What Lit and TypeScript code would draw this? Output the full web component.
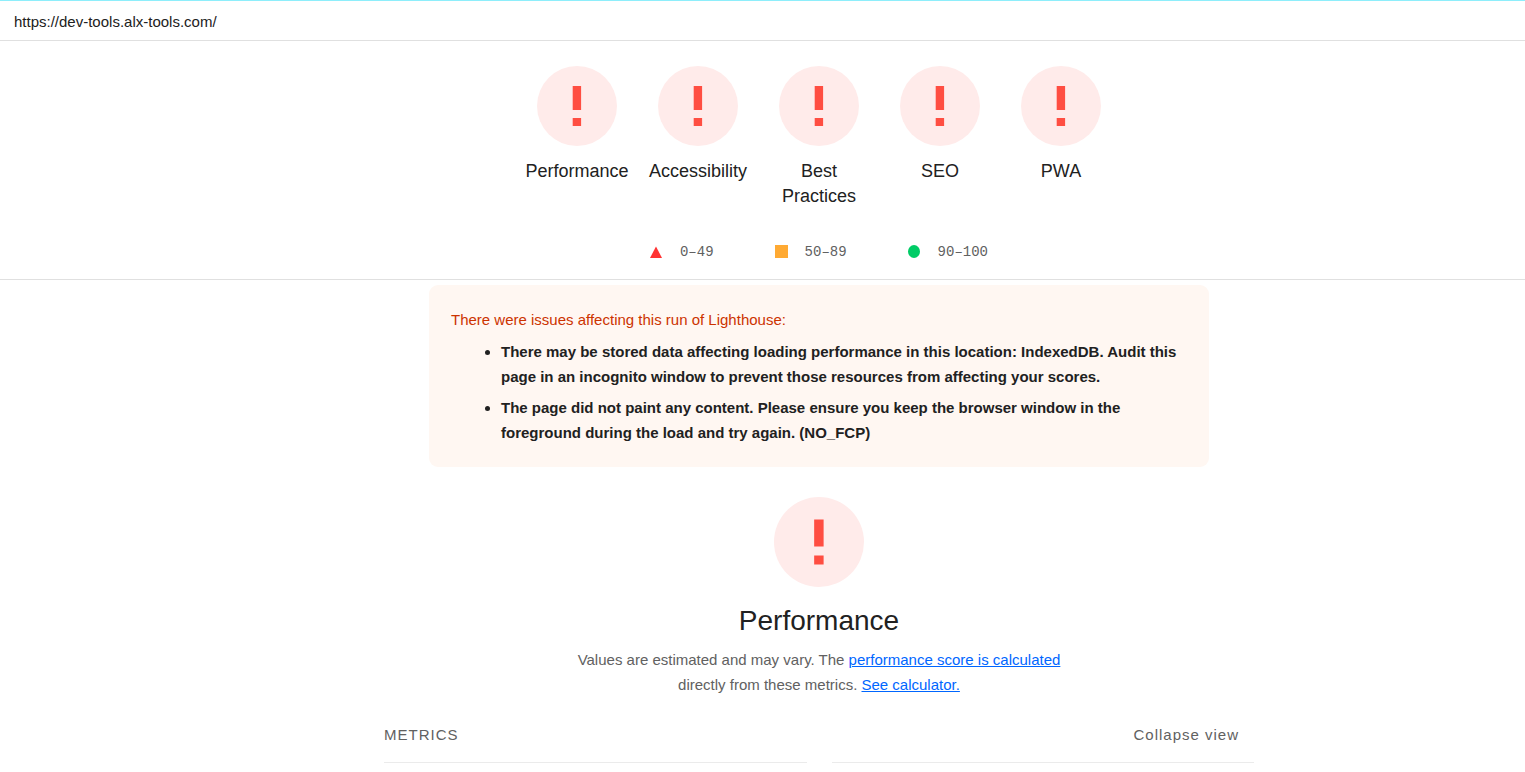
import { LitElement, html, css, svg } from "lit";
import { customElement, property } from "lit/decorators.js";

@customElement("error-gauge")
class ErrorGauge extends LitElement {
  @property() label = "";

  static styles = css`
    :host {
      display: block;
      width: 80px;
      height: 80px;
    }
    .dial {
      display: block;
      width: 100%;
      height: 100%;
    }
    .disc {
      fill: #ffebea;
    }
    .mark {
      fill: #ff4e42;
    }
  `;

  render() {
    return html`
      <svg class="dial" viewBox="0 0 80 80" role="img" aria-label=${this.label}>
        <circle class="disc" cx="40" cy="40" r="40"></circle>
        <path class="mark" d="M35.7 20h8.4v24h-8.4zM35.7 52h8.4v8h-8.4z"></path>
      </svg>
    `;
  }
}

const categories = ["Performance", "Accessibility", "Best Practices", "SEO", "PWA"];

const scale = [
  { range: "0–49", shape: svg`<path fill="#ff3333" d="M6 1.5L12 13H0z"/>` },
  { range: "50–89", shape: svg`<rect fill="#ffaa33" width="13" height="13"/>` },
  { range: "90–100", shape: svg`<ellipse fill="#00cc66" cx="6" cy="6.5" rx="6" ry="6.5"/>` },
];

const warnings = [
  "There may be stored data affecting loading performance in this location: IndexedDB. Audit this page in an incognito window to prevent those resources from affecting your scores.",
  "The page did not paint any content. Please ensure you keep the browser window in the foreground during the load and try again. (NO_FCP)",
];

@customElement("app-root")
class AppRoot extends LitElement {
  static styles = css`
    :host {
      display: block;
      background: #fff;
      color: #212121;
      font: 15px/25px "Liberation Sans", Arial, sans-serif;
    }
    .topbar {
      display: flex;
      padding: 8px 14px 6px;
      border-top: 1px solid #8eeefb;
      border-bottom: 1px solid #e0e0e0;
    }
    .url {
      color: inherit;
      text-decoration: none;
    }
    .scores,
    .report {
      padding-left: 113px;
    }
    .scores {
      padding-top: 25px;
      padding-bottom: 14px;
      border-bottom: 1px solid #e0e0e0;
    }
    .gauges {
      display: grid;
      grid-template-columns: repeat(5, 121px);
      justify-content: center;
    }
    .category {
      display: flex;
      flex-direction: column;
      align-items: center;
      gap: 13px;
      padding: 0 10px;
      color: inherit;
      font-size: 18px;
      text-align: center;
      text-decoration: none;
    }
    .legend {
      display: flex;
      justify-content: center;
      gap: 61px;
      margin-top: 31px;
      color: #616161;
      font: 14px/25px "Liberation Mono", monospace;
    }
    .range {
      display: flex;
      align-items: center;
      gap: 17px;
    }
    .shape {
      display: block;
      width: 13px;
      height: 13px;
      padding-bottom: 2px;
    }
    .warnings {
      box-sizing: border-box;
      max-width: 780px;
      margin: 5px auto 0;
      padding: 22px;
      border-radius: 9px;
      background: #fff7f2;
    }
    .warnings-title {
      margin: 0;
      color: #cc3300;
    }
    .warning-list {
      display: grid;
      gap: 6px;
      margin: 7px 0 0;
      padding: 0 0 0 50px;
      font-weight: bold;
    }
    .summary {
      display: flex;
      flex-direction: column;
      align-items: center;
      margin-top: 30px;
      text-align: center;
    }
    .large {
      width: 90px;
      height: 90px;
    }
    .title {
      margin: 16px 0 9px;
      font-size: 28px;
      line-height: 35px;
      font-weight: normal;
    }
    .description {
      max-width: 500px;
      margin: 0;
      color: #616161;
    }
    .link {
      color: #0066ff;
    }
    .metrics {
      max-width: 870px;
      margin: 25px auto 0;
      color: #616161;
    }
    .metrics-head {
      display: flex;
      justify-content: space-between;
      padding-right: 15px;
      letter-spacing: 1px;
    }
    .metrics-title {
      margin: 0;
      font-size: 15px;
      font-weight: normal;
    }
    .toggle {
      padding: 0;
      border: 0;
      background: none;
      color: inherit;
      font: inherit;
      letter-spacing: inherit;
      cursor: pointer;
    }
    .columns {
      display: grid;
      grid-template-columns: 1fr 1fr;
      gap: 25px;
      margin-top: 15px;
    }
    .column {
      border-top: 1px solid #ebebeb;
    }
  `;

  render() {
    return html`
      <header class="topbar">
        <a class="url" href="https://dev-tools.alx-tools.com/">https://dev-tools.alx-tools.com/</a>
      </header>
      <section class="scores">
        <nav class="gauges">
          ${categories.map(
            (name) => html`<a class="category" href="#">
              <error-gauge label="Error"></error-gauge>
              <span>${name}</span>
            </a>`
          )}
        </nav>
        <div class="legend">
          ${scale.map(
            ({ range, shape }) => html`<span class="range">
              <svg class="shape" viewBox="0 0 13 13" aria-hidden="true">${shape}</svg>
              <span>${range}</span>
            </span>`
          )}
        </div>
      </section>
      <main class="report">
        <section class="warnings">
          <p class="warnings-title">There were issues affecting this run of Lighthouse:</p>
          <ul class="warning-list">
            ${warnings.map((text) => html`<li>${text}</li>`)}
          </ul>
        </section>
        <section class="summary">
          <error-gauge class="large" label="Error"></error-gauge>
          <h1 class="title">Performance</h1>
          <p class="description">
            Values are estimated and may vary. The
            <a class="link" href="#">performance score is calculated</a>
            directly from these metrics. <a class="link" href="#">See calculator.</a>
          </p>
        </section>
        <section class="metrics">
          <div class="metrics-head">
            <h2 class="metrics-title">METRICS</h2>
            <button class="toggle" type="button">Collapse view</button>
          </div>
          <div class="columns">
            <div class="column"></div>
            <div class="column"></div>
          </div>
        </section>
      </main>
    `;
  }
}
